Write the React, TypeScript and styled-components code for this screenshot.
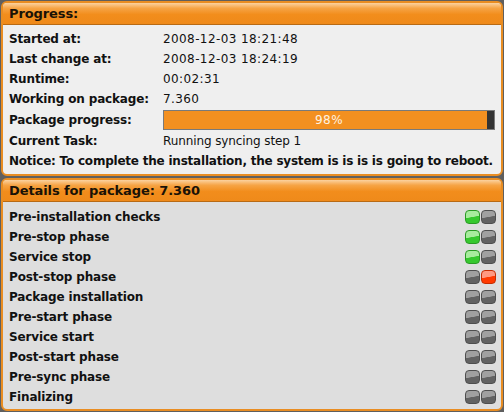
import styled, { createGlobalStyle } from "styled-components";

const GlobalStyle = createGlobalStyle`
  html, body {
    margin: 0;
    padding: 0;
    background: #5f5f5f;
  }
  body {
    font-family: "DejaVu Sans", Verdana, sans-serif;
    font-size: 12px;
    color: #111;
  }
`;

type LedState = "on" | "off" | "error";

const info = [
  { label: "Started at:", value: "2008-12-03 18:21:48" },
  { label: "Last change at:", value: "2008-12-03 18:24:19" },
  { label: "Runtime:", value: "00:02:31" },
  { label: "Working on package:", value: "7.360" },
];

const phases: { name: string; leds: [LedState, LedState] }[] = [
  { name: "Pre-installation checks", leds: ["on", "off"] },
  { name: "Pre-stop phase", leds: ["on", "off"] },
  { name: "Service stop", leds: ["on", "off"] },
  { name: "Post-stop phase", leds: ["off", "error"] },
  { name: "Package installation", leds: ["off", "off"] },
  { name: "Pre-start phase", leds: ["off", "off"] },
  { name: "Service start", leds: ["off", "off"] },
  { name: "Post-start phase", leds: ["off", "off"] },
  { name: "Pre-sync phase", leds: ["off", "off"] },
  { name: "Finalizing", leds: ["off", "off"] },
];

const Page = styled.div`
  width: 504px;
  height: 412px;
  padding: 1px;
  box-sizing: border-box;
  display: flex;
  flex-direction: column;
  gap: 2px;
`;

const Panel = styled.section<{ $tint: string; $grow?: boolean }>`
  border: 2px solid #e98d22;
  border-radius: 6px;
  background: ${(p) => p.$tint};
  overflow: hidden;
  flex: ${(p) => (p.$grow ? "1" : "none")};
`;

const PanelTitle = styled.h2`
  margin: 0;
  height: 21px;
  padding: 0 6px;
  display: flex;
  align-items: center;
  font-size: 13px;
  font-weight: bold;
  letter-spacing: -0.1px;
  color: #1a1206;
  background: linear-gradient(#fbd2a0 0%, #f6a445 25%, #f28d1c 55%, #ef8a1a 100%);
  border-bottom: 1px solid #b86a14;
`;

const InfoBody = styled.div`
  padding: 4px 6px 3px;
  display: flex;
  flex-direction: column;
`;

const InfoRow = styled.div<{ $tall?: boolean }>`
  display: grid;
  grid-template-columns: 154px 1fr;
  align-items: center;
  height: ${(p) => (p.$tall ? "22px" : "20px")};
`;

const Label = styled.span`
  font-weight: bold;
  letter-spacing: -0.15px;
  white-space: nowrap;
`;

const Value = styled.span<{ $numeric?: boolean }>`
  white-space: nowrap;
  letter-spacing: ${(p) => (p.$numeric ? "0.4px" : "-0.1px")};
`;

const Notice = styled.div`
  height: 20px;
  display: flex;
  align-items: center;
  font-weight: bold;
  letter-spacing: -0.22px;
  white-space: nowrap;
`;

const Bar = styled.div`
  position: relative;
  height: 18px;
  border: 1px solid #7a7a7a;
  background: #333;
  display: flex;
`;

const BarFill = styled.div`
  background: #f39020;
  height: 100%;
`;

const BarText = styled.span`
  position: absolute;
  inset: 0;
  display: flex;
  align-items: center;
  justify-content: center;
  color: #fff3e0;
  font-size: 12px;
  letter-spacing: 0.4px;
`;

const PhaseBody = styled.div`
  padding: 5px 6px 0;
  display: flex;
  flex-direction: column;
`;

const PhaseRow = styled.div`
  height: 20px;
  display: flex;
  align-items: center;
  justify-content: space-between;
`;

const Leds = styled.div`
  display: flex;
  gap: 1px;
  margin-right: -1px;
`;

const ledColors: Record<LedState, [string, string, string]> = {
  on: ["#a8ec9e", "#36c82e", "#2a9a24"],
  off: ["#a0a0a0", "#626262", "#4e4e4e"],
  error: ["#ff9a80", "#ff3a00", "#c42c00"],
};

const Led = styled.span<{ $state: LedState }>`
  width: 15px;
  height: 14px;
  box-sizing: border-box;
  border-radius: 4px;
  border: 1px solid ${(p) => ledColors[p.$state][2]};
  background: linear-gradient(
    170deg,
    ${(p) => ledColors[p.$state][0]} 0%,
    ${(p) => ledColors[p.$state][0]} 48%,
    ${(p) => ledColors[p.$state][1]} 52%,
    ${(p) => ledColors[p.$state][1]} 100%
  );
`;

const isNumeric = (v: string) => /^[\d\s:.-]+$/.test(v);

const App = () => {
  const progress = 98;

  return (
    <>
      <GlobalStyle />
      <Page>
        <Panel $tint="#efefef">
          <PanelTitle>Progress:</PanelTitle>
          <InfoBody>
            {info.map((row) => (
              <InfoRow key={row.label}>
                <Label>{row.label}</Label>
                <Value $numeric={isNumeric(row.value)}>{row.value}</Value>
              </InfoRow>
            ))}
            <InfoRow $tall>
              <Label>Package progress:</Label>
              <Bar>
                <BarFill style={{ width: `${progress}%` }} />
                <BarText>{progress}%</BarText>
              </Bar>
            </InfoRow>
            <InfoRow>
              <Label>Current Task:</Label>
              <Value>Running syncing step 1</Value>
            </InfoRow>
            <Notice>
              Notice: To complete the installation, the system is is is is going to reboot.
            </Notice>
          </InfoBody>
        </Panel>

        <Panel $tint="#dedede" $grow>
          <PanelTitle>Details for package: 7.360</PanelTitle>
          <PhaseBody>
            {phases.map((phase) => (
              <PhaseRow key={phase.name}>
                <Label>{phase.name}</Label>
                <Leds>
                  {phase.leds.map((state, i) => (
                    <Led key={i} $state={state} />
                  ))}
                </Leds>
              </PhaseRow>
            ))}
          </PhaseBody>
        </Panel>
      </Page>
    </>
  );
};

export default App;
